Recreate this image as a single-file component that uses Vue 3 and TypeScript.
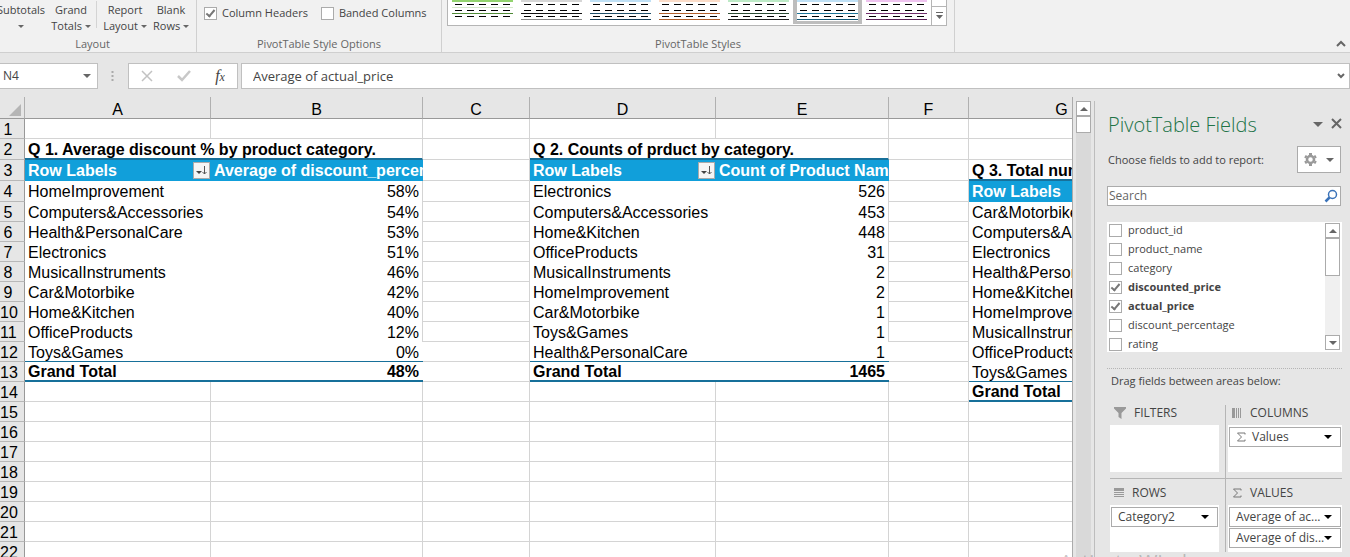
<script setup lang="ts">
import { ref } from 'vue'

interface Cell {
  text?: string
  kind: string
  span?: number
  sort?: boolean
}

interface Pivot {
  start: number
  title: string
  valueHeader?: string
  items: [string, string?][]
  total?: string
}

const columns = ['A', 'B', 'C', 'D', 'E', 'F', 'G']

const pivotA: Pivot = {
  start: 2,
  title: 'Q 1. Average discount % by product category.',
  valueHeader: 'Average of discount_percentage',
  items: [
    ['HomeImprovement', '58%'],
    ['Computers&Accessories', '54%'],
    ['Health&PersonalCare', '53%'],
    ['Electronics', '51%'],
    ['MusicalInstruments', '46%'],
    ['Car&Motorbike', '42%'],
    ['Home&Kitchen', '40%'],
    ['OfficeProducts', '12%'],
    ['Toys&Games', '0%'],
  ],
  total: '48%',
}

const pivotD: Pivot = {
  start: 2,
  title: 'Q 2. Counts of prduct by category.',
  valueHeader: 'Count of Product Name',
  items: [
    ['Electronics', '526'],
    ['Computers&Accessories', '453'],
    ['Home&Kitchen', '448'],
    ['OfficeProducts', '31'],
    ['MusicalInstruments', '2'],
    ['HomeImprovement', '2'],
    ['Car&Motorbike', '1'],
    ['Toys&Games', '1'],
    ['Health&PersonalCare', '1'],
  ],
  total: '1465',
}

const pivotG: Pivot = {
  start: 3,
  title: 'Q 3. Total number of reviews',
  items: [
    ['Car&Motorbike'],
    ['Computers&Accessories'],
    ['Electronics'],
    ['Health&PersonalCare'],
    ['Home&Kitchen'],
    ['HomeImprovement'],
    ['MusicalInstruments'],
    ['OfficeProducts'],
    ['Toys&Games'],
  ],
}

function pivotCells(p: Pivot, row: number): Cell[] {
  const wide = p.valueHeader !== undefined
  const i = row - p.start
  const last = p.items.length + 1
  if (i < 0 || i > last + 1) {
    return wide ? [{ kind: 'grid' }, { kind: 'grid' }] : [{ kind: 'grid' }]
  }
  if (i === 0) return [{ text: p.title, kind: 'title', span: wide ? 2 : 1 }]
  if (i === 1) {
    const head: Cell[] = [{ text: 'Row Labels', kind: 'head', sort: wide }]
    if (wide) head.push({ text: p.valueHeader, kind: 'head' })
    return head
  }
  if (i <= last) {
    const item = p.items[i - 2]
    const edge = i === last ? ' final' : ''
    const cells: Cell[] = [{ text: item[0], kind: 'item' + edge }]
    if (wide) cells.push({ text: item[1], kind: 'item num' + edge })
    return cells
  }
  const total: Cell[] = [{ text: 'Grand Total', kind: 'total' }]
  if (wide) total.push({ text: p.total, kind: 'total num' })
  return total
}

const rows = Array.from({ length: 22 }, (_, n) => {
  const row = n + 1
  return {
    row,
    tall: row >= 2 && row <= 4,
    cells: [
      ...pivotCells(pivotA, row),
      { kind: 'grid' } as Cell,
      ...pivotCells(pivotD, row),
      { kind: 'grid' } as Cell,
      ...pivotCells(pivotG, row),
    ],
  }
})

const columnHeaders = ref(true)
const bandedColumns = ref(false)
const formula = ref('Average of actual_price')
const search = ref('')

const fields = ref([
  { name: 'product_id', on: false },
  { name: 'product_name', on: false },
  { name: 'category', on: false },
  { name: 'discounted_price', on: true },
  { name: 'actual_price', on: true },
  { name: 'discount_percentage', on: false },
  { name: 'rating', on: false },
])

const styles = [
  { name: 'Green', top: '#92d36e', a: '#d5e8cb', b: '#4f8a36', c: '' },
  { name: 'Gray', top: '#d6d6d6', a: '', b: '#111111', c: '#8a8a8a' },
  { name: 'Blue', top: '#bfe0f5', a: '', b: '#1f4e68', c: '#17405a' },
  { name: 'Orange', top: '#fbdcc8', a: '', b: '#b0602c', c: '#b0602c' },
  { name: 'Mint', top: '#bdeac6', a: '', b: '#2b4a33', c: '#222222' },
  { name: 'Sky', top: '#bfe0f5', a: '', b: '#1c7396', c: '#155a78' },
  { name: 'Purple', top: '#efc3ef', a: '', b: '#70306c', c: '#5d2459' },
]
const selectedStyle = 'Sky'
</script>

<template>
  <div class="app">
    <header class="ribbon">
      <section class="group layout-group">
        <div class="tools">
          <button class="tool subtotals">Subtotals<br /><i class="caret"></i></button>
          <button class="tool grand">Grand<br />Totals <i class="caret"></i></button>
          <span class="rule"></span>
          <button class="tool report">Report<br />Layout <i class="caret"></i></button>
          <button class="tool blank">Blank<br />Rows <i class="caret"></i></button>
        </div>
        <div class="caption">Layout</div>
      </section>
      <section class="group options-group">
        <div class="checks">
          <label><input v-model="columnHeaders" type="checkbox" class="check" />Column Headers</label>
          <label><input v-model="bandedColumns" type="checkbox" class="check" />Banded Columns</label>
        </div>
        <div class="caption">PivotTable Style Options</div>
      </section>
      <section class="group styles-group">
        <div class="gallery">
          <div class="thumbs">
            <button
              v-for="s in styles"
              :key="s.name"
              class="thumb"
              :class="{ selected: s.name === selectedStyle }"
              :aria-label="s.name"
            >
              <svg width="61" height="21" viewBox="0 0 61 21" shape-rendering="crispEdges">
                <rect width="61" height="21" fill="#fff" />
                <rect width="61" height="2" :fill="s.top" />
                <path d="M3 4.500H58M3 10.500H58M3 16.500H58" stroke="#000" stroke-dasharray="7 5" />
                <path v-if="s.a" d="M0 7.500H61" :stroke="s.a" />
                <path d="M0 13.500H61" :stroke="s.b" />
                <path v-if="s.c" d="M0 19.500H61" :stroke="s.c" />
              </svg>
            </button>
          </div>
          <div class="gallery-nav">
            <button aria-label="Scroll styles"></button>
            <button aria-label="More styles">
              <svg width="9" height="8" viewBox="0 0 9 8">
                <path d="M1 .5H8" stroke="#666" />
                <path d="M1 3H8L4.500 7Z" fill="#666" />
              </svg>
            </button>
          </div>
        </div>
        <div class="caption">PivotTable Styles</div>
      </section>
      <button class="collapse" aria-label="Collapse the ribbon">
        <svg width="10" height="7" viewBox="0 0 10 7">
          <path d="M1 6L5 2L9 6" fill="none" stroke="#666" stroke-width="2" />
        </svg>
      </button>
    </header>

    <div class="formula-bar">
      <button class="name-box">N4<i class="caret big"></i></button>
      <svg class="dots" width="3" height="12" viewBox="0 0 3 12">
        <path d="M.5 1h2v2h-2zM.5 5h2v2h-2zM.5 9h2v2h-2z" fill="#aaa" />
      </svg>
      <div class="entry">
        <button aria-label="Cancel">
          <svg width="12" height="12" viewBox="0 0 12 12">
            <path d="M1 1L11 11M11 1L1 11" stroke="#c2c2c2" stroke-width="1.500" />
          </svg>
        </button>
        <button aria-label="Enter">
          <svg width="14" height="12" viewBox="0 0 14 12">
            <path d="M1 6L5 10L13 1" fill="none" stroke="#c8c8c8" stroke-width="2.500" />
          </svg>
        </button>
        <button class="fx" aria-label="Insert function">f<small>x</small></button>
      </div>
      <div class="formula">
        <input v-model="formula" aria-label="Formula" />
        <button aria-label="Expand formula bar">
          <svg width="8" height="6" viewBox="0 0 8 6">
            <path d="M1 1L4 4L7 1" fill="none" stroke="#666" stroke-width="2" />
          </svg>
        </button>
      </div>
    </div>

    <main class="work">
      <div class="sheet">
        <table>
          <colgroup>
            <col class="w-index" />
            <col v-for="c in columns" :key="c" :class="'w-' + c" />
          </colgroup>
          <thead>
            <tr>
              <th class="corner">
                <svg width="12" height="12" viewBox="0 0 12 12"><path d="M12 0V12H0Z" fill="#b5b5b5" /></svg>
              </th>
              <th v-for="c in columns" :key="c" scope="col" class="col-head">{{ c }}</th>
            </tr>
          </thead>
          <tbody>
            <tr v-for="r in rows" :key="r.row" :class="{ tall: r.tall }">
              <th scope="row" class="row-head">{{ r.row }}</th>
              <td v-for="(c, i) in r.cells" :key="i" :class="c.kind" :colspan="c.span || 1">
                <div v-if="c.sort" class="with-sort">
                  {{ c.text }}
                  <button class="sort" aria-label="Sort and filter row labels">
                    <svg width="15" height="15" viewBox="0 0 15 15">
                      <path d="M2 8H8L5 11Z" fill="#444" />
                      <path d="M10.500 3V11M8.500 9L10.500 11L12.500 9" fill="none" stroke="#555" />
                    </svg>
                  </button>
                </div>
                <template v-else>{{ c.text }}</template>
              </td>
            </tr>
          </tbody>
        </table>
      </div>

      <div class="scrollbar sheet-scroll">
        <button class="step" aria-label="Scroll up"><i class="caret up"></i></button>
        <span class="handle"></span>
      </div>

      <aside class="pane">
        <div class="pane-title">
          <h2>PivotTable Fields</h2>
          <button aria-label="Pane options"><i class="caret large"></i></button>
          <button aria-label="Close pane">
            <svg width="11" height="11" viewBox="0 0 11 11">
              <path d="M1 1L10 10M10 1L1 10" stroke="#666" stroke-width="2" />
            </svg>
          </button>
        </div>
        <div class="choose">
          <span>Choose fields to add to report:</span>
          <button class="gear" aria-label="Tools">
            <svg width="13" height="13" viewBox="0 0 13 13">
              <circle cx="6.500" cy="6.500" r="3.500" fill="none" stroke="#999" stroke-width="2.500" />
              <path
                d="M5 0h3v2H5zM5 11h3v2H5zM.2 4.500L1.700 1.900L3.400 2.900L1.900 5.500zM11.100 7.500L12.800 8.500L11.300 11.100L9.600 10.100zM.2 8.500L1.900 7.500L3.400 10.100L1.700 11.100zM9.600 2.900L11.300 1.900L12.800 4.500L11.100 5.500z"
                fill="#999"
              />
            </svg>
            <i class="caret big"></i>
          </button>
        </div>
        <div class="search">
          <input v-model="search" type="text" placeholder="Search" aria-label="Search fields" />
          <svg width="14" height="14" viewBox="0 0 14 14">
            <circle cx="8.500" cy="5.500" r="4" fill="none" stroke="#3b73b9" stroke-width="1.500" />
            <path d="M5.500 8.500L1.500 12.500" stroke="#3b73b9" stroke-width="2.500" />
          </svg>
        </div>
        <div class="fields">
          <div class="field-list">
            <label v-for="f in fields" :key="f.name" :class="{ on: f.on }">
              <input v-model="f.on" type="checkbox" class="check" />{{ f.name }}
            </label>
          </div>
          <div class="scrollbar list-scroll">
            <button class="step" aria-label="Scroll up"><i class="caret up"></i></button>
            <span class="handle"></span>
            <button class="step end" aria-label="Scroll down"><i class="caret big"></i></button>
          </div>
        </div>
        <div class="drag">Drag fields between areas below:</div>
        <div class="areas">
          <section class="area">
            <h3>
              <svg width="12" height="12" viewBox="0 0 12 12"><path d="M0 0H12V1.500L7.500 6V12L4.500 10V6L0 1.500Z" fill="#999" /></svg>
              FILTERS
            </h3>
            <div class="drop"></div>
          </section>
          <section class="area right">
            <h3>
              <svg width="10" height="10" viewBox="0 0 10 10" shape-rendering="crispEdges">
                <path d="M0 0h3v10H0zM4 0h1v10H4zM6 0h1v10H6zM8 0h1v10H8z" fill="#999" />
              </svg>
              COLUMNS
            </h3>
            <div class="drop">
              <button class="chip">
                <svg width="10" height="10" viewBox="0 0 10 10">
                  <path d="M9 2.500V1H1.500L5.500 5L1.500 9H9V7.500" fill="none" stroke="#777" />
                </svg>
                <span>Values</span><i class="caret black"></i>
              </button>
            </div>
          </section>
          <section class="area lower">
            <h3>
              <svg width="10" height="10" viewBox="0 0 10 10" shape-rendering="crispEdges">
                <path d="M0 0h10v3H0zM0 4h10v1H0zM0 6h10v1H0zM0 8h10v1H0z" fill="#999" />
              </svg>
              ROWS
            </h3>
            <div class="drop">
              <button class="chip"><span>Category2</span><i class="caret black"></i></button>
            </div>
          </section>
          <section class="area right lower">
            <h3>
              <svg width="10" height="10" viewBox="0 0 10 10">
                <path d="M9 2.500V1H1.500L5.500 5L1.500 9H9V7.500" fill="none" stroke="#777" />
              </svg>
              VALUES
            </h3>
            <div class="drop">
              <button class="chip"><span>Average of ac...</span><i class="caret black"></i></button>
              <button class="chip"><span>Average of dis...</span><i class="caret black"></i></button>
            </div>
          </section>
        </div>
      </aside>
    </main>
    <div class="watermark">Activate Windows</div>
  </div>
</template>

<style>
body {
  overflow: hidden;
}
</style>

<style scoped>
.app,
.app * {
  box-sizing: border-box;
}
.app {
  position: relative;
  display: flex;
  flex-direction: column;
  height: 100vh;
  overflow: hidden;
  background: #e6e6e6;
  color: #444;
  font: 11px/16px "Open Sans", "Noto Sans", sans-serif;
}
button {
  margin: 0;
  padding: 0;
  border: 0;
  background: none;
  color: inherit;
  font: inherit;
}
svg {
  display: block;
  flex: none;
}
.caret {
  display: inline-block;
  flex: none;
  border: 3px solid transparent;
  border-top-color: #666;
  border-bottom-width: 0;
  vertical-align: middle;
}
.caret.big {
  border-width: 4px 4px 0;
}
.caret.large {
  border-width: 5px 5px 0;
}
.caret.up {
  border-width: 0 4px 4px;
  border-bottom-color: #666;
}
.caret.black {
  border-width: 4px 4px 0;
  border-top-color: #000;
}

/* Ribbon */
.ribbon {
  display: flex;
  flex: none;
  height: 53px;
  background: #f1f1f1;
  border-bottom: 1px solid #cfcfcf;
}
.group {
  display: flex;
  flex-direction: column;
  justify-content: space-between;
  height: 52px;
  border-right: 1px solid #d0d0d0;
  background: #f1f1f1;
}
.layout-group {
  width: 197px;
}
.options-group {
  width: 245px;
}
.styles-group {
  width: 513px;
}
.caption {
  text-align: center;
  color: #666;
}
.layout-group .caption {
  padding-right: 11px;
}
.tools {
  display: flex;
  height: 34px;
  padding-top: 1px;
  margin-left: -4px;
}
.tool {
  white-space: nowrap;
  text-align: center;
}
.subtotals,
.grand {
  width: 50px;
}
.rule {
  width: 1px;
  height: 27px;
  background: #d4d4d4;
}
.report {
  width: 56px;
}
.blank {
  width: 36px;
}
.checks {
  display: flex;
  gap: 13px;
  padding: 5px 0 0 7px;
}
label {
  display: flex;
  align-items: center;
  gap: 5px;
  white-space: nowrap;
}
.check {
  appearance: none;
  display: flex;
  flex: none;
  justify-content: center;
  width: 13px;
  height: 13px;
  margin: 0;
  border: 1px solid #ababab;
  background: #fff;
}
.check:checked::after {
  content: "";
  box-sizing: border-box;
  width: 5px;
  height: 9px;
  border: solid #777;
  border-width: 0 2px 2px 0;
  transform: rotate(40deg);
}
.gallery {
  display: flex;
  width: 500px;
  height: 26px;
  margin-left: 5px;
  border: 1px solid #b5b5b5;
  border-top: 0;
  background: #fff;
}
.thumbs {
  display: flex;
  flex: 1;
}
.thumb {
  display: flex;
  justify-content: center;
  width: 69px;
  height: 24px;
}
.thumb.selected {
  background: #bdbdbd;
}
.gallery-nav {
  display: flex;
  flex-direction: column;
  width: 15px;
  border-left: 1px solid #b5b5b5;
}
.gallery-nav button {
  display: flex;
  align-items: center;
  justify-content: center;
  height: 18px;
}
.gallery-nav button:first-child {
  height: 7px;
  border-bottom: 1px solid #b5b5b5;
}
.collapse {
  margin: auto 4px 5px auto;
}

/* Formula bar */
.formula-bar {
  display: flex;
  flex: none;
  align-items: center;
  height: 44px;
  padding: 2px 0 0;
}
.name-box,
.entry,
.formula {
  display: flex;
  align-items: center;
  height: 26px;
  border: 1px solid #c0c0c0;
  background: #fff;
}
.name-box {
  justify-content: space-between;
  width: 98px;
  padding: 0 6px 0 3px;
  border-left: 0;
  font-size: 12px;
}
.dots {
  margin: 0 14px 0 13px;
}
.entry {
  justify-content: space-around;
  width: 110px;
  margin-right: 3px;
}
.fx {
  color: #444;
  font: italic 16px/20px "Liberation Serif", serif;
}
.fx small {
  font-size: 12px;
}
.formula {
  flex: 1;
  padding: 0 4px 0 11px;
}
.formula input {
  flex: 1;
  padding: 0;
  border: 0;
  outline: 0;
  color: #444;
  font: 13px/20px "Open Sans", "Noto Sans", sans-serif;
}

/* Worksheet */
.work {
  display: flex;
  flex: 1;
  min-height: 0;
}
.sheet {
  flex: 1;
  min-width: 0;
  overflow: hidden;
  border-right: 1px solid #ababab;
  background: #fff;
  color: #000;
  font: 16px/16px "Liberation Sans", Arial, sans-serif;
}
table {
  width: 1155px;
  table-layout: fixed;
  border-collapse: separate;
  border-spacing: 0;
}
.w-index {
  width: 25px;
}
.w-A,
.w-D,
.w-G {
  width: 186px;
}
.w-B {
  width: 212px;
}
.w-C {
  width: 107px;
}
.w-E {
  width: 173px;
}
.w-F {
  width: 80px;
}
th,
td {
  height: 20px;
  padding: 2px 3px 0;
  overflow: hidden;
  line-height: 16px;
  white-space: nowrap;
}
.tall th,
.tall td {
  height: 21px;
}
thead th {
  height: 22px;
  padding: 5px 0 0;
  border-right: 1px solid #b0b0b0;
  border-bottom: 1px solid #999;
  background: #e6e6e6;
  font-weight: 400;
}
.corner svg {
  margin-left: 9px;
}
.row-head {
  padding: 2px 8px 0 0;
  border-right: 1px solid #999;
  border-bottom: 1px solid #b8b8b8;
  background: #e6e6e6;
  font-weight: 400;
  text-align: center;
  text-overflow: clip;
}
.grid {
  border-right: 1px solid #d4d4d4;
  border-bottom: 1px solid #d4d4d4;
}
.title {
  border-right: 1px solid #d4d4d4;
  border-bottom: 2px solid #17709a;
  font-weight: 700;
}
.head {
  background: #119fda;
  color: #fff;
  font-weight: 700;
}
.tall .head,
.tall .item {
  padding-top: 0;
}
.item.num {
  border-right: 1px solid #d4d4d4;
}
.item.final {
  border-right: 0;
  border-bottom: 1px solid #17709a;
}
.total {
  border-bottom: 2px solid #17709a;
  font-weight: 700;
}
.total.num,
.final.num {
  padding-right: 4px;
}
.num {
  text-align: right;
}
.with-sort {
  display: flex;
  align-items: center;
  justify-content: space-between;
  margin-right: -2px;
}
.sort {
  border: 1px solid #aaa;
  background: #f5f5f5;
}

/* Scrollbars */
.scrollbar {
  display: flex;
  flex: none;
  flex-direction: column;
  width: 15px;
}
.step,
.handle {
  display: flex;
  align-items: center;
  justify-content: center;
  flex: none;
  height: 15px;
  border: 1px solid #ababab;
  background: #fff;
}
.sheet-scroll {
  margin: 4px 3px 0;
  background: #d9d9d9;
}
.sheet-scroll .handle {
  height: 17px;
}
.list-scroll {
  height: 127px;
  margin-top: 1px;
  background: #f0f0f0;
}
.list-scroll .handle {
  height: 38px;
}
.step.end {
  margin-top: auto;
}

/* Field pane */
.pane {
  flex: none;
  width: 256px;
  margin-top: 4px;
  padding: 12px 8px 0 12px;
  border-left: 1px solid #bdbdbd;
}
.pane-title {
  display: flex;
  align-items: center;
  gap: 8px;
  height: 24px;
  padding-left: 1px;
}
h2 {
  flex: 1;
  margin: 0;
  color: #217346;
  font-size: 20px;
  font-weight: 300;
  line-height: 24px;
  white-space: nowrap;
}
.pane-title button {
  height: 24px;
  padding-bottom: 4px;
}
.choose {
  display: flex;
  align-items: center;
  justify-content: space-between;
  height: 27px;
  margin-top: 9px;
  padding-left: 1px;
  white-space: nowrap;
}
.gear {
  display: flex;
  align-items: center;
  justify-content: center;
  gap: 9px;
  width: 44px;
  height: 27px;
  margin-right: 1px;
  border: 1px solid #ababab;
  background: #fff;
}
.search {
  display: flex;
  align-items: center;
  height: 20px;
  margin: 13px 1px 0 0;
  padding: 0 2px 0 1px;
  border: 1px solid #ababab;
  background: #fff;
}
.search input {
  flex: 1;
  min-width: 0;
  padding: 0;
  border: 0;
  outline: 0;
  background: none;
  font: 12px/16px "Open Sans", "Noto Sans", sans-serif;
}
.search input::placeholder {
  color: #666;
}
.fields {
  display: flex;
  justify-content: space-between;
  height: 130px;
  margin-top: 16px;
  padding: 0 2px;
  background: #fff;
  overflow: hidden;
}
.field-list label {
  gap: 6px;
  height: 19px;
  padding-bottom: 3px;
}
.field-list label.on {
  font-weight: 700;
}
.drag {
  margin-top: 16px;
  padding: 4px 0 0 4px;
  border-top: 1px dotted #b5b5b5;
  white-space: nowrap;
}
.areas {
  display: grid;
  grid-template-columns: 116px minmax(0, 1fr);
  margin: 16px 0 0 3px;
}
.area {
  padding: 0 6px 6px 0;
  border-right: 1px solid #b5b5b5;
}
.area.right {
  padding: 0 0 6px 2px;
  border-right: 0;
}
.area.lower {
  padding-top: 6px;
  border-top: 1px solid #b5b5b5;
  padding-bottom: 0;
}
h3 {
  display: flex;
  align-items: center;
  gap: 8px;
  height: 20px;
  margin: 0;
  padding: 0 0 4px 4px;
  font-size: 12px;
  font-weight: 400;
  line-height: 16px;
}
.drop {
  display: flex;
  flex-direction: column;
  gap: 1px;
  height: 47px;
  padding: 2px 1px;
  background: #fff;
}
.chip {
  display: flex;
  align-items: center;
  gap: 6px;
  height: 20px;
  padding: 0 8px 0 6px;
  border: 1px solid #ababab;
  background: #fff;
  font-size: 12px;
  text-align: left;
  white-space: nowrap;
}
.chip span {
  flex: 1;
  min-width: 0;
}
.watermark {
  position: absolute;
  right: 126px;
  bottom: -18px;
  color: rgba(110, 110, 110, 0.4);
  font-size: 20px;
  line-height: 26px;
  pointer-events: none;
}
</style>
